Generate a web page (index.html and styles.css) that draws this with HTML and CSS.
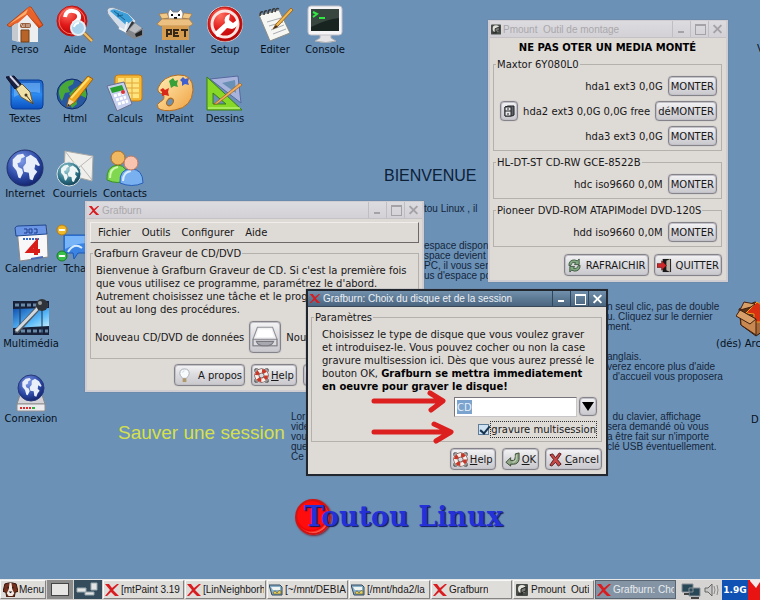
FILE: index.html
```html
<!DOCTYPE html>
<html lang="fr">
<head>
<meta charset="utf-8">
<title>Toutou Linux</title>
<link rel="stylesheet" href="styles.css">
</head>
<body>
<svg class="defs" aria-hidden="true">
  <defs>
    <linearGradient id="gBlue" x1="0" y1="0" x2="0" y2="1"><stop offset="0" stop-color="#1f62c4"/><stop offset=".5" stop-color="#2a8af0"/><stop offset="1" stop-color="#0a4fc0"/></linearGradient>
    <radialGradient id="gGlobe" cx=".4" cy=".3" r=".75"><stop offset="0" stop-color="#7f9ae6"/><stop offset=".6" stop-color="#2d4aa6"/><stop offset="1" stop-color="#0f1f66"/></radialGradient>
    <radialGradient id="gTeal" cx=".4" cy=".3" r=".75"><stop offset="0" stop-color="#9fd0d8"/><stop offset=".6" stop-color="#2f7488"/><stop offset="1" stop-color="#123c50"/></radialGradient>
    <radialGradient id="gRed" cx=".35" cy=".25" r=".8"><stop offset="0" stop-color="#ff7060"/><stop offset=".5" stop-color="#e01818"/><stop offset="1" stop-color="#b00000"/></radialGradient>
    <linearGradient id="gRoof" x1="0" y1="0" x2="1" y2="1"><stop offset="0" stop-color="#ff9a50"/><stop offset="1" stop-color="#d8400c"/></linearGradient>
    <linearGradient id="gPal" x1="0" y1="0" x2="1" y2="1"><stop offset="0" stop-color="#fff0b8"/><stop offset="1" stop-color="#f0a040"/></linearGradient>
    <linearGradient id="gFilm" x1="0" y1="0" x2="1" y2="1"><stop offset="0" stop-color="#0e4fae"/><stop offset=".6" stop-color="#58b8f8"/><stop offset="1" stop-color="#c8f0ff"/></linearGradient>
    <symbol id="continents" viewBox="0 0 36 36"><path d="M5 9l5-5 6-1 2 3-4 2-1 4-3 1 1 4 4 2 1 4-3 6-2-1-2-7-4-5zM19 7l5-3 6 4 4 7-2 1-3-2-1 5 3 3-3 4-2 5-3-1-1-7-5-1-1-5 3-4z"/></symbol>

    <symbol id="i-home" viewBox="0 0 38 38"><path d="M6 18v17l8 2h18V17L19 6z" fill="#eceef0"/><path d="M6 18v17l6 2V15z" fill="#c5cad0"/><path d="M23 2L1 20l3 2L21 9l12 14 4-3L25 2z" fill="url(#gRoof)" stroke="#b03408" stroke-width=".8"/><path d="M23 2L3 20l9-2L22 9l12 12 2-1z" fill="#e8622c"/><path d="M22 4L6 17l-2 2L20 9z" fill="#ffb070"/><rect x="14" y="18" width="11" height="5" rx="2" fill="#996040"/><path d="M15 19l2 3m1-3v3m3-3v3m2-3v3" stroke="#e8d0c0"/><path d="M15 37V25h8v12z" fill="#b86428" stroke="#704018"/></symbol>
    <symbol id="i-help" viewBox="0 0 38 38"><circle cx="16" cy="16" r="15" fill="url(#gRed)" stroke="#b81818"/><circle cx="16" cy="16" r="13" fill="none" stroke="#f47868"/><path d="M9 12q1-7 8-6 7 1 6 7-1 3-5 5v3" fill="none" stroke="#fff" stroke-width="4"/><path d="M28 28l8 8" stroke="#9a7040" stroke-width="4"/><path d="M28 28l8 8" stroke="#f0c060" stroke-width="2"/><circle cx="22" cy="23" r="7" fill="#a8dcf8" fill-opacity=".95" stroke="#e4ecf4" stroke-width="2"/><path d="M18 22q1-4 5-4" fill="none" stroke="#fff" stroke-width="2"/></symbol>
    <symbol id="i-usb" viewBox="0 0 38 38"><path d="M1 5q2-4 8-2l13 5 8 8-9 13-7-5L4 12Q1 9 1 5z" fill="#d4deea" stroke="#7b90a8"/><path d="M4 6q3-3 7-1l11 4 5 6-7 5-8-7z" fill="#3e9fd8"/><path d="M8 6l11 9m-8-4l6-1m-5-2l1 4" stroke="#14618e" fill="none"/><path d="M21 17l-2 9-6-3" fill="none" stroke="#f0f4f8" stroke-width="2"/><path d="M26 16l11 8-9 9-8-6z" fill="#33363c"/><path d="M28 18l9 6v7l-9 3-8-5 2-4z" fill="#83878c"/><path d="M23 25l6 3 7-5-7-5z" fill="#b8bcc0"/><path d="M29 29l1 3 6-2v-5z" fill="#222"/></symbol>
    <symbol id="i-pet" viewBox="0 0 38 38"><path d="M12 14V8l2-4 3 3h5l3-3 2 4v6z" fill="#fff" stroke="#888"/><path d="M15 10h2m5 0h2m-6 3h3" stroke="#111" stroke-width="2"/><path d="M6 14h27v20H6z" fill="#e0a858"/><path d="M6 14L3 9l8-1 2 5zM33 14l3-5-8-1-2 5z" fill="#f0c888" stroke="#a87030" stroke-width=".6"/><path d="M1 19l5-5h27l4 5-3 2H4z" fill="#ecc080" stroke="#b07838" stroke-width=".7"/><path d="M6 21h27v14H6z" fill="#d69c50"/><path d="M11 32v-7h4v4h-4m12-4h-5v6h5m-5-3h4m3-3h7m-3 0v7" fill="none" stroke="#382818" stroke-width="2"/></symbol>
    <symbol id="i-setup" viewBox="0 0 38 38"><circle cx="19" cy="19" r="18" fill="#e6e0e0"/><circle cx="19" cy="19" r="17" fill="url(#gRed)" stroke="#a81414"/><circle cx="19" cy="19" r="13" fill="none" stroke="#fbe4e0" stroke-width="3"/><path d="M10 31L9 27l10-9q-2-7 5-9l-1 6 4 3 5-4q1 8-6 10l-5-1-9 9z" fill="#fff"/></symbol>
    <symbol id="i-edit" viewBox="0 0 38 38"><path d="M3 10l20-5 11 23-20 8z" fill="#f6f6f2" stroke="#8c8c88"/><path d="M11 17l14-4M13 21l14-4M15 25l13-5M17 29l13-5" stroke="#a8acb4"/><path d="M4 11q0-5 3-4m1 3q0-5 3-4m1 3q0-5 3-4m1 3q0-5 3-4m0 3q1-5 4-3" stroke="#383838" stroke-width="1.5" fill="none"/><path d="M17 24l3-5L35 3l2 2-15 16z" fill="#f0b850" stroke="#a06820"/><path d="M17 24l3-4 2 2z" fill="#443020"/></symbol>
    <symbol id="i-console" viewBox="0 0 38 38"><path d="M14 29h11v4l5 3q-10 3-21 0l5-3z" fill="#e4e4e6" stroke="#b0b0b4"/><rect x="2" y="1" width="34" height="29" rx="3" fill="#f4f4f6" stroke="#c0c0c8"/><rect x="5" y="4" width="28" height="22" fill="#182420"/><path d="M5 4h28v9q-12 1-28 9z" fill="#384640"/><path d="M7 7l4 2-4 3M13 13h6" fill="none" stroke="#30e840" stroke-width="2"/></symbol>
    <symbol id="i-text" viewBox="0 0 38 38"><rect x="5" y="6" width="32" height="29" rx="4" fill="url(#gBlue)" stroke="#073c98"/><path d="M8 9h26v10q-12-3-26 4z" fill="#78b8f8" fill-opacity=".6"/><path d="M0 3l8-1 7 8-6 5z" fill="#1c2040" stroke="#0c1030"/><path d="M4 2l9 10" stroke="#d0d4e4" stroke-width="2"/><path d="M10 15l6-5 8 8 3 12-12-7z" fill="#f0e0a8" stroke="#6c5830"/><path d="M27 30l-7-9" stroke="#483820"/><circle cx="20" cy="21" r="1.5" fill="#483820"/></symbol>
    <symbol id="i-html" viewBox="0 0 38 38"><circle cx="16" cy="20" r="15" fill="#2858a0" stroke="#102c68"/><path d="M4 13q6-8 14-7l-1 4-5 3 2 5-5 1-3 8q-5-7-2-14zM18 15l8-5q6 8 4 14l-6-3-4 3 1 6-5 4-3-6 3-4-3-4z" fill="#48a838"/><path d="M11 33l2-9L32 2l5 3-18 23z" fill="#f0a820" stroke="#a06000"/><path d="M15 24L33 4" stroke="#ffe070" stroke-width="2"/><path d="M11 33l2-8 5 3z" fill="#f4d8a8"/><path d="M11 33l1-3 2 1z" fill="#222"/></symbol>
    <symbol id="i-calc" viewBox="0 0 38 38"><rect x="9" y="1" width="27" height="26" rx="3" fill="#f4b838" stroke="#c87810"/><rect x="12" y="4" width="21" height="20" fill="#ffe480"/><path d="M12 9h21M12 14h21M12 19h21M19 4v20M26 4v20" stroke="#e0a838"/><path d="M1 12l17-4 8 22-15 7z" fill="#c8d0f0" stroke="#687090"/><path d="M4 14l12-3 2 5-12 3z" fill="#28a030"/><path d="M8 22l10-3m-8 7l10-3m-8 7l10-3" stroke="#fff" stroke-width="3" stroke-dasharray="3 1"/><circle cx="17" cy="18" r="2" fill="#e03030"/></symbol>
    <symbol id="i-paint" viewBox="0 0 38 38"><path d="M22 1q15-1 15 15-1 17-18 20Q7 38 2 34q-2-4 2-6 6-3 3-8-6-1-5-6Q7 2 22 1z" fill="url(#gPal)" stroke="#b46c20"/><ellipse cx="14" cy="28" rx="3" ry="4" fill="#6b90b5" stroke="#a86820" transform="rotate(35 14 28)"/><path d="M13 7l4-3 2 3 3-1-1 4 1 3-4-1-3 2-1-4z" fill="#38a038"/><path d="M24 6l3-3 2 2 4-1-1 4 1 3-4-1-3 2v-4z" fill="#4060d0"/><path d="M4 16l3-2 2 2 4-2-1 4 1 4-4-1-3 1v-4z" fill="#d82818"/></symbol>
    <symbol id="i-draw" viewBox="0 0 38 38"><path d="M4 5l28-3 3 27z" fill="#a8b4dc" stroke="#5868a0"/><path d="M16 9l13-3 1 13z" fill="#6b90b5"/><path d="M1 3v33h35z" fill="#88d828" stroke="#388010"/><path d="M7 19v11h13z" fill="#6b90b5" stroke="#388010"/><path d="M8 30L34 9l2 2-25 19z" fill="#f0b060" stroke="#a06020" stroke-width=".7"/><path d="M2 34h32" stroke="#c8f890"/></symbol>
    <symbol id="i-globe" viewBox="0 0 38 38"><circle cx="19" cy="19" r="18" fill="url(#gGlobe)" stroke="#20306c"/><use href="#continents" x="2" y="2" width="34" height="34" fill="#e8eefa"/></symbol>
    <symbol id="i-mail" viewBox="0 0 38 38"><path d="M9 2l28 5-1 25-28-7z" fill="#f0efec" stroke="#a8a8a4"/><path d="M9 2l13 17L37 7M36 31L25 17" fill="none" stroke="#b8b8b4"/><circle cx="13" cy="25" r="12" fill="url(#gTeal)" stroke="#d8e4e8"/><use href="#continents" x="2" y="14" width="22" height="22" fill="#eef6f6"/></symbol>
    <symbol id="i-people" viewBox="0 0 38 38"><path d="M1 31q-1-14 11-15 10 1 10 15-10 5-21 0z" fill="#80d850" stroke="#389020"/><path d="M4 29q0-10 8-11" stroke="#d0f8b0" stroke-width="2" fill="none"/><circle cx="12" cy="9" r="7" fill="#f0b860" stroke="#b07020"/><path d="M14 34q-1-14 11-14 12 0 12 14-11 5-23 0z" fill="#78b0f0" stroke="#2860b8"/><path d="M17 32q0-9 8-10" stroke="#d8ecff" stroke-width="2" fill="none"/><circle cx="25" cy="14" r="7" fill="#f8c4b0" stroke="#c07860"/></symbol>
    <symbol id="i-cal" viewBox="0 0 38 38"><path d="M5 4l30-2 1 31-28 4z" fill="#f8f8f8" stroke="#888"/><path d="M3 4q1-2 3-2l28-1 1 9-31 2z" fill="#6a94e4" stroke="#204890"/><path d="M12 5h3v4h-3m5-4h3v4h-3zm5 0h3v4h-3" stroke="#1c3c90" fill="none"/><path d="M11 15h16" stroke="#3868c8" stroke-width="2" stroke-dasharray="2 1"/><path d="M24 31V19l-7 8h11" fill="none" stroke="#d81c18" stroke-width="4"/><path d="M19 35l12-2" stroke="#4868b8" stroke-width="2"/></symbol>
    <symbol id="i-chat" viewBox="0 0 38 38"><path d="M8 11h28v18H22l-4 6-1-6H8z" fill="#3c84e4" stroke="#1c58b8"/><path d="M9 12h26v7q-14-1-26 6z" fill="#78b4f8"/><path d="M12 28q6-10 14-4" fill="none" stroke="#d8ecff" stroke-width="2"/><circle cx="6" cy="6" r="5" fill="#f0b828" stroke="#b87c10"/><circle cx="6" cy="32" r="5" fill="#38c048" stroke="#187828"/><path d="M3 6h6M3 32h6" stroke="#fff" stroke-width="2"/></symbol>
    <symbol id="i-film" viewBox="0 0 38 38"><rect x="1" y="2" width="36" height="34" fill="#182038"/><path d="M1 10l36-1v18l-36 2z" fill="url(#gFilm)"/><path d="M3 6h33M3 32h33" stroke="#6888a8" stroke-width="3" stroke-dasharray="4 2"/><path d="M8 2v34M30 2v34" stroke="#183050"/><path d="M4 33L27 8" stroke="#505860" stroke-width="5"/><path d="M4 32L27 8" stroke="#d0d8e0" stroke-width="3"/><circle cx="30" cy="6" r="6" fill="#303438"/><circle cx="28" cy="4" r="2" fill="#989ca0"/></symbol>
    <symbol id="i-net" viewBox="0 0 38 38"><path d="M8 21h22l3 9H5z" fill="#d4d4d8" stroke="#888"/><rect x="5" y="30" width="28" height="7" rx="1" fill="#ececee" stroke="#909094"/><path d="M8 34h11" stroke="#d83030" stroke-width="2" stroke-dasharray="2 1"/><path d="M20 34h3" stroke="#30b040" stroke-width="2"/><circle cx="19" cy="14" r="13" fill="url(#gGlobe)" stroke="#28387c"/><use href="#continents" x="7" y="2" width="24" height="24" fill="#e8eefa"/></symbol>
    <symbol id="i-box" viewBox="0 0 38 38"><path d="M3 10l16-7 17 7v16L20 37 5 26z" fill="#a86838" stroke="#301808"/><path d="M4 11l16 8 16-9-16-6z" fill="#5c3418"/><path d="M10 14L21 3l14 10-4 2v8H18v-8z" fill="#d83010" stroke="#f0a020"/><path d="M4 11l16 9v16L5 26z" fill="#c88850" stroke="#402010"/><path d="M4 11L0 17l14 8 6-5zM4 11L8 3l11 2-4 3z" fill="#d8a068" stroke="#402010"/></symbol>

    <symbol id="x-logo" viewBox="0 0 14 12"><path d="M0 0h4l3 4 5-4h2L8 6l6 6h-4L6 8l-4 4H0l5-6z" fill="#d81c20"/></symbol>
    <symbol id="s-buoy" viewBox="0 0 16 16"><circle cx="8" cy="8" r="5" fill="none" stroke="#401814" stroke-width="5"/><circle cx="8" cy="8" r="5" fill="none" stroke="#f8f0ec" stroke-width="4"/><circle cx="8" cy="8" r="5" fill="none" stroke="#c83828" stroke-width="4" stroke-dasharray="4 3.85"/><path d="M1 4V1h3m8 0h3v3M1 12v3h3m8 0h3v-3" fill="none" stroke="#333"/></symbol>
    <symbol id="s-bulb" viewBox="0 0 16 16"><path d="M8 1q5 0 5 5 0 2-3 5H6Q3 8 3 6q0-5 5-5z" fill="#f8fafc" stroke="#a8b0b8"/><path d="M6 5q0-2 2-2" stroke="#c8d8e8" fill="none"/><path d="M6 11h4v4H6z" fill="#b0986c"/></symbol>
    <symbol id="s-ok" viewBox="0 0 16 16"><path d="M1 11l5-5v3h3q2-1 2-4V2l4-1v7q-1 5-6 5H6v2z" fill="#90a888" stroke="#384830"/><path d="M12 3v5q-1 3-4 3" fill="none" stroke="#c8d8c0"/></symbol>
    <symbol id="s-cancel" viewBox="0 0 16 16"><path d="M2 3l3-1 3 4 4-5 2 1-4 6 4 5-3 2-3-4-4 4-2-1 4-6z" fill="#c84848" stroke="#581818"/></symbol>
    <symbol id="s-refresh" viewBox="0 0 16 16"><path d="M2 8q0-6 6-6l3 1 2-2v6H8l1-2q-4-1-5 3zM14 8q0 6-6 6l-3-1-2 2V9h5l-1 2q4 1 5-3z" fill="#80a880" stroke="#284028" stroke-width=".8"/></symbol>
    <symbol id="s-quit" viewBox="0 0 16 16"><path d="M6 1h9v14H6z" fill="#181818"/><path d="M10 3l4-2v14l-4-2z" fill="#b8b0a0"/><path d="M0 6h5V3l5 5-5 5v-3H0z" fill="#d02828" stroke="#601010" stroke-width=".7"/></symbol>
    <symbol id="s-cabinet" viewBox="0 0 12 12"><path d="M2 2l3-1h6v9l-2 1H2z" fill="#606468" stroke="#202428"/><path d="M2 2h6v9H2z" fill="#e8e8e8" stroke="#202428"/><path d="M2 6h6M4 4h2M4 9h2" stroke="#202428"/></symbol>
    <symbol id="s-drive" viewBox="0 0 24 24"><path d="M5 3h14l4 11v6H1v-6z" fill="#f2f2f4" stroke="#909098"/><path d="M1 14h22v6H1z" fill="#dcdce0" stroke="#808088"/><path d="M4 16h16q-1 3-5 4H9q-4-1-5-4z" fill="#a8a8b0" stroke="#78787e"/><path d="M6 5h12l2 7H4z" fill="#fff"/></symbol>
    <symbol id="s-disk" viewBox="0 0 12 12"><rect width="12" height="12" rx="1" fill="#484c48"/><circle cx="6" cy="5" r="4" fill="#e4e4dc"/><path d="M5 5l5-2v4L5 9zM2 10h5" fill="#787c78" stroke="#202020"/></symbol>
    <symbol id="s-file" viewBox="0 0 14 12"><path d="M0 1h11l2 2v8H3z" fill="#88b0c8" stroke="#304860"/><path d="M2 3h9v3H4z" fill="#f0f4f0"/><path d="M4 9q2-4 4 0 2-4 4-2v3H5z" fill="#e8d060" stroke="#505030" stroke-width=".6"/></symbol>
    <symbol id="s-dog" viewBox="0 0 16 16"><path d="M2 2l4-1h4l4 1 2 8-3 1-1 5H4l-1-5-3-1z" fill="#74301c" stroke="#301008"/><path d="M7 1h2l1 7 2 4-2 3H6l-2-3 2-4z" fill="#f4ece4"/><path d="M6 10h4l-2 2z" fill="#181010"/><path d="M5 6h1m4 0h1" stroke="#100808" stroke-width="2"/></symbol>
  </defs>
</svg>

<div class="screen">
  <main class="desktop">
    <h2 class="welcome">BIENVENUE</h2>
    <p class="wall wall-intro">tou Linux , il</p>
    <p class="wall wall-space">espace dispon<br>space devient<br>PC, il vous ser<br>us d'espace po</p>
    <div class="wall wall-right">
      <p>n seul clic, pas de double<br>u. Cliquez sur le dernier<br>ment.</p>
      <p>anglais.<br>verez encore plus d'aide<br>&nbsp; d'accueil vous proposera</p>
      <p>&nbsp; du clavier, affichage<br>sera demandé où vous<br>a être fait sur n'importe<br>clé USB éventuellement.</p>
    </div>
    <p class="wall wall-left">Lor<br>vide<br>vou<br>que<br>Ce</p>
    <h2 class="save">Sauver une session</h2>
    <div class="brand"><span class="brand-ball"></span><h1>Toutou Linux</h1></div>

    <nav class="icons" aria-label="Bureau">
      <a class="icon" href="#"><svg><use href="#i-home"/></svg>Perso</a>
      <a class="icon" href="#"><svg><use href="#i-help"/></svg>Aide</a>
      <a class="icon" href="#"><svg><use href="#i-usb"/></svg>Montage</a>
      <a class="icon" href="#"><svg><use href="#i-pet"/></svg>Installer</a>
      <a class="icon" href="#"><svg><use href="#i-setup"/></svg>Setup</a>
      <a class="icon" href="#"><svg><use href="#i-edit"/></svg>Editer</a>
      <a class="icon" href="#"><svg><use href="#i-console"/></svg>Console</a>
      <a class="icon first" href="#"><svg><use href="#i-text"/></svg>Textes</a>
      <a class="icon" href="#"><svg><use href="#i-html"/></svg>Html</a>
      <a class="icon" href="#"><svg><use href="#i-calc"/></svg>Calculs</a>
      <a class="icon" href="#"><svg><use href="#i-paint"/></svg>MtPaint</a>
      <a class="icon" href="#"><svg><use href="#i-draw"/></svg>Dessins</a>
      <a class="icon first" href="#"><svg><use href="#i-globe"/></svg>Internet</a>
      <a class="icon" href="#"><svg><use href="#i-mail"/></svg>Courriels</a>
      <a class="icon" href="#"><svg><use href="#i-people"/></svg>Contacts</a>
      <a class="icon first wide" href="#"><svg><use href="#i-cal"/></svg>Calendrier</a>
      <a class="icon" href="#"><svg><use href="#i-chat"/></svg>Tcha</a>
      <a class="icon first wide" href="#"><svg><use href="#i-film"/></svg>Multimédia</a>
      <a class="icon first wide" href="#"><svg><use href="#i-net"/></svg>Connexion</a>
    </nav>
    <div class="edge edge-v">V</div>
    <a class="icon edge edge-box" href="#"><svg><use href="#i-box"/></svg>(dés) Arc</a>
    <div class="edge edge-d">D</div>

    <section class="window pmount">
      <header class="titlebar"><svg class="t-disk"><use href="#s-disk"/></svg><span class="title">Pmount&nbsp; Outil de montage</span><button class="ctl min" aria-label="Réduire"></button><button class="ctl max" aria-label="Agrandir"></button><button class="ctl close" aria-label="Fermer"></button></header>
      <div class="body">
        <h3>NE PAS OTER UN MEDIA MONTÉ</h3>
        <fieldset>
          <legend>Maxtor 6Y080L0</legend>
          <div class="row">hda1 ext3 0,0G <button class="btn">MONTER</button></div>
          <div class="row"><button class="btn cab" aria-label="Ouvrir"><svg><use href="#s-cabinet"/></svg></button>hda2 ext3 0,0G 0,0G free <button class="btn">déMONTER</button></div>
          <div class="row">hda3 ext3 0,0G <button class="btn">MONTER</button></div>
        </fieldset>
        <fieldset>
          <legend>HL-DT-ST CD-RW GCE-8522B</legend>
          <div class="row">hdc iso9660 0,0M <button class="btn">MONTER</button></div>
        </fieldset>
        <fieldset>
          <legend>Pioneer DVD-ROM ATAPIModel DVD-120S</legend>
          <div class="row">hdd iso9660 0,0M <button class="btn">MONTER</button></div>
        </fieldset>
        <div class="actions"><button class="btn big"><svg><use href="#s-refresh"/></svg>RAFRAICHIR</button><button class="btn big"><svg><use href="#s-quit"/></svg>QUITTER</button></div>
      </div>
    </section>

    <section class="window grafburn">
      <header class="titlebar"><svg class="t-x"><use href="#x-logo"/></svg><span class="title">Grafburn</span><button class="ctl min" aria-label="Réduire"></button><button class="ctl max" aria-label="Agrandir"></button><button class="ctl close" aria-label="Fermer"></button></header>
      <div class="body">
        <nav class="menubar"><a href="#">Fichier</a><a href="#">Outils</a><a href="#">Configurer</a><a href="#">Aide</a></nav>
        <fieldset>
          <legend>Grafburn Graveur de CD/DVD</legend>
          <p>Bienvenue à Grafburn Graveur de CD. Si c'est la première fois<br>que vous utilisez ce programme, paramétrez le d'abord.<br>Autrement choisissez une tâche et le prog<br>tout au long des procédures.</p>
          <div class="tasks">Nouveau CD/DVD de données <button class="btn drive" aria-label="Nouveau CD/DVD de données"><svg><use href="#s-drive"/></svg></button>Nou</div>
        </fieldset>
        <div class="actions"><button class="btn big about"><svg><use href="#s-bulb"/></svg>A propos</button><button class="btn big"><svg><use href="#s-buoy"/></svg><span><u>H</u>elp</span></button><button class="btn big" aria-label="Quitter"><svg><use href="#s-quit"/></svg></button></div>
      </div>
    </section>

    <section class="window dialog">
      <header class="titlebar"><svg class="t-x"><use href="#x-logo"/></svg><span class="title">Grafburn: Choix du disque et de la session</span><button class="ctl min" aria-label="Réduire"></button><button class="ctl max" aria-label="Agrandir"></button><button class="ctl close" aria-label="Fermer"></button></header>
      <div class="body">
        <fieldset>
          <legend>Paramètres</legend>
          <p>Choisissez le type de disque que vous voulez graver<br>et introduisez-le. Vous pouvez cocher ou non la case<br>gravure multisession ici. Dès que vous aurez pressé le<br>bouton OK, <b>Grafburn se mettra immediatement<br>en oeuvre pour graver le disque!</b></p>
          <div class="combo"><input type="text" value="CD" aria-label="Type de disque"><button class="btn arrow" aria-label="Choisir"></button></div>
          <div class="check"><input type="checkbox" id="multi" checked><label for="multi">gravure multisession</label></div>
        </fieldset>
        <div class="actions"><button class="btn big"><svg><use href="#s-buoy"/></svg><span><u>H</u>elp</span></button><button class="btn big"><svg><use href="#s-ok"/></svg><span><u>O</u>K</span></button><button class="btn big"><svg><use href="#s-cancel"/></svg><span><u>C</u>ancel</span></button></div>
      </div>
      <svg class="arrows" viewBox="0 0 90 56" aria-hidden="true"><g fill="none" stroke="#dc2020" stroke-width="5" stroke-linecap="round" stroke-linejoin="round"><path d="M5 13h68M61 5l13 8-12 9"/><path d="M5 44h76M65 36l17 8-15 9"/></g></svg>
    </section>
  </main>

  <footer class="taskbar">
    <button class="start"><svg><use href="#s-dog"/></svg>Menu</button>
    <div class="pager"><span></span></div>
    <div class="pager on"><svg viewBox="0 0 28 19"><path d="M3 8h9v4H3zM17 3h6v7h-6zM11 12h9v3h-9z" fill="#e4e4e4" stroke="#98a8b0"/></svg></div>
    <button class="task"><svg><use href="#x-logo"/></svg><span>[mtPaint 3.19</span></button>
    <button class="task"><svg><use href="#x-logo"/></svg><span>[LinNeighborh</span></button>
    <button class="task"><svg><use href="#s-file"/></svg><span>[~/mnt/DEBIA</span></button>
    <button class="task"><svg><use href="#s-file"/></svg><span>[/mnt/hda2/la</span></button>
    <button class="task"><svg><use href="#x-logo"/></svg><span>Grafburn</span></button>
    <button class="task"><svg><use href="#s-disk"/></svg><span>Pmount&nbsp; Outi</span></button>
    <button class="task active"><svg><use href="#x-logo"/></svg><span>Grafburn: Cho</span></button>
    <div class="tray"><svg viewBox="0 0 46 20" aria-hidden="true"><path d="M6 4h11v8H6zM13 8h11v8H13z" fill="#284858" stroke="#889098"/><path d="M8 14h5M15 18h8" stroke="#444" stroke-width="2"/><path d="M29 8h3l4-4v12l-4-4h-3z" fill="#c8c8c8" stroke="#666"/><path d="M38 6q2 4 0 8M41 5q2 5 0 10" fill="none" stroke="#888"/></svg></div>
    <div class="free">1.9G</div>
    <div class="meter"><svg viewBox="0 0 12 20" aria-hidden="true"><path d="M2 1l6 7 4-6V0H2z" fill="#f4e8e8"/></svg></div>
  </footer>
</div>
</body>
</html>
```
FILE: styles.css
```css
* { box-sizing: border-box; }

body {
  margin: 0;
  font: 10px/13px "DejaVu Sans", sans-serif;
  color: #181818;
}

h1, h2, h3, p, fieldset, legend { margin: 0; padding: 0; }
button, input { font: inherit; color: inherit; margin: 0; padding: 0; }
a { color: inherit; text-decoration: none; }
.defs { position: absolute; width: 0; height: 0; }

.screen {
  display: flex;
  flex-direction: column;
  min-height: 100vh;
  overflow: hidden;
}

.desktop {
  position: relative;
  flex: 1;
  overflow: hidden;
  background: #6b91b6;
}

/* Wallpaper text */
.welcome, .save, .wall {
  position: absolute;
  font-family: "Liberation Sans", sans-serif;
  white-space: nowrap;
}
.welcome { left: 384px; top: 167px; font-size: 16px; line-height: 18px; font-weight: 400; color: #0c2038; }
.save { left: 118px; top: 423px; font-size: 19px; line-height: 20px; font-weight: 400; color: #d6e04c; }
.wall { font-size: 10px; line-height: 10px; color: #14263c; }
.wall-intro { left: 424px; top: 204px; }
.wall-space { left: 424px; top: 241px; }
.wall-right { left: 607px; top: 302px; }
.wall-right p { margin-bottom: 20px; }
.wall-right p + p { margin-bottom: 30px; }
.wall-left { left: 291px; top: 412px; }

.brand { position: absolute; left: 295px; top: 499px; display: flex; align-items: center; }
.brand-ball {
  width: 36px;
  height: 36px;
  margin-right: -27px;
  border: 2px solid #d01414;
  border-radius: 50%;
  background: radial-gradient(circle at 45% 45%, #ff0c0c 55%, #f00000 62%, #ff6050 70%);
  box-shadow: 1px 1px 2px #702838;
}
.brand h1 {
  font: bold 27px/36px "DejaVu Serif", serif;
  color: #2430d8;
  text-shadow: 1px 1px 1px #101858;
  white-space: nowrap;
}

/* Desktop icons */
.icons {
  display: grid;
  grid-template-columns: repeat(7, 50px);
  grid-template-rows: 69px;
  grid-auto-rows: 75px;
  width: 350px;
  padding-top: 5px;
}
.icon {
  display: flex;
  flex-direction: column;
  align-items: center;
  width: 50px;
  color: #06101c;
  white-space: nowrap;
}
.icon svg { width: 38px; height: 38px; flex: none; }
.icon.first { grid-column: 1; }
.icon.wide { width: 62px; }
.edge { position: absolute; color: #06101c; }
.edge-v { left: 757px; top: 42px; }
.edge-d { left: 751px; top: 413px; }
.edge-box { left: 716px; top: 299px; width: 80px; align-items: flex-start; }
.edge-box svg { margin-left: 20px; }

/* Windows */
.window {
  position: absolute;
  border: 2px solid #cfcdd2;
  border-top-width: 1px;
  background: #dedad6;
  box-shadow: 0 0 1px #68747f;
}
.pmount { left: 488px; top: 20px; width: 240px; }
.grafburn { left: 85px; top: 201px; width: 339px; height: 191px; }
.dialog { left: 306px; top: 289px; width: 302px; border: 2px solid #22262e; }

.titlebar {
  display: flex;
  align-items: center;
  height: 17px;
  background: linear-gradient(#dcdbdf, #d3d1d5);
  border-bottom: 1px solid #c4c2c4;
  font: 10px/13px "Liberation Sans", sans-serif;
  color: #aaa8ac;
}
.titlebar svg { flex: none; margin: 0 2px 0 1px; }
.t-x { width: 12px; height: 9px; }
.t-disk { width: 10px; height: 11px; }
.title { flex: 1; white-space: nowrap; }
.ctl {
  position: relative;
  width: 18px;
  height: 16px;
  border: 0;
  border-left: 1px solid #c0bec2;
  background: none;
  color: #a4a2a6;
}
.ctl::before, .ctl.close::after { content: ""; position: absolute; }
.min::before { left: 5px; bottom: 4px; width: 6px; height: 2px; background: currentColor; }
.max::before { left: 4px; top: 3px; width: 9px; height: 8px; border: 1px solid; border-top-width: 2px; }
.close::before, .close::after { left: 3px; top: 7px; width: 11px; height: 2px; background: currentColor; }
.close::before { transform: rotate(45deg); }
.close::after { transform: rotate(-45deg); }
.dialog .titlebar { height: 16px; background: linear-gradient(#7190ab, #4a6580); border-bottom-color: #384858; color: #edf1f5; }
.dialog .ctl { color: #fff; border-left-color: #30465c; height: 15px; }

fieldset {
  min-width: 0;
  border: 1px solid #b4b0ac;
}
legend { margin-left: 2px; padding: 0 1px; white-space: nowrap; }

.btn {
  display: inline-flex;
  align-items: center;
  justify-content: center;
  height: 20px;
  padding: 0 2px;
  border: 1px solid #85838a;
  border-radius: 4px;
  background: linear-gradient(#f4f3f5, #dddce0 45%, #c9c8cc);
  box-shadow: inset 0 0 0 1px #c2c1c8, 0 0 1px #98969c;
  white-space: nowrap;
}
.btn.big { height: 22px; gap: 2px; }
.btn.big svg { width: 15px; height: 15px; flex: none; }
.actions { display: flex; justify-content: flex-end; gap: 6px; }

.pmount .body { padding: 3px 4px 4px 3px; }
.pmount h3 { font-size: 10px; line-height: 13px; text-align: center; margin-bottom: 4px; color: #000; }
.pmount fieldset { margin-bottom: 5px; padding: 5px 4px 4px 0; display: grid; gap: 5px; }
.row { display: flex; align-items: center; justify-content: flex-end; gap: 5px; height: 20px; }
.row .btn { min-width: 48px; }
.row .cab { min-width: 18px; width: 18px; }
.cab svg { width: 12px; height: 12px; flex: none; }
.pmount .actions { padding-top: 2px; gap: 5px; }
.pmount .big { gap: 4px; }

.grafburn .body { padding: 3px 3px 0; }
.menubar {
  display: flex;
  gap: 11px;
  height: 21px;
  padding: 3px 7px 0;
  border: 1px solid #6c6a68;
  border-top-color: #f0eeec;
  border-left-color: #f0eeec;
}
.grafburn fieldset { margin-top: 4px; padding: 4px 0 0; height: 112px; white-space: nowrap; }
.grafburn fieldset p { padding-left: 5px; }
.tasks { display: flex; align-items: center; gap: 5px; margin-top: 5px; padding-left: 4px; }
.drive { width: 32px; height: 32px; }
.drive svg { width: 26px; height: 26px; flex: none; }
.grafburn .actions { justify-content: flex-start; margin-top: 5px; padding-left: 84px; }
.grafburn .about { gap: 6px; }

.dialog .body { padding: 4px 4px 4px 3px; }
.dialog fieldset { padding: 4px 4px 3px 0; white-space: nowrap; }
.dialog p { padding-left: 10px; }
.dialog p b { color: #000; }
.combo { display: flex; justify-content: flex-end; gap: 2px; margin-top: 4px; }
.combo input {
  width: 123px;
  height: 20px;
  padding-left: 2px;
  border: 1px solid #78767a;
  border-right-color: #c8c6c8;
  border-bottom-color: #c8c6c8;
  color: #e4f0fa;
  background: #fff linear-gradient(#7ba3cd, #7ba3cd) no-repeat 2px 2px / 15px 14px;
  outline: 0;
}
.arrow { width: 18px; height: 19px; }
.arrow::before { content: ""; border: 6px solid transparent; border-top: 9px solid #000; border-bottom: 0; }
.check { display: flex; align-items: center; justify-content: flex-end; height: 18px; margin-top: 3px; }
.check input {
  appearance: none;
  width: 11px;
  height: 11px;
  margin-right: 1px;
  border: 1px solid #5f7d98;
  background: #cfe2f2;
  position: relative;
}
.check input:checked::before {
  content: "";
  position: absolute;
  left: 3px;
  top: -1px;
  width: 4px;
  height: 8px;
  border: solid #163450;
  border-width: 0 2px 2px 0;
  transform: rotate(40deg);
}
.check label { height: 17px; padding: 1px 0 0; border: 1px dotted #333; }
.dialog .actions { padding: 6px 0 0; }
.arrows { position: absolute; left: 61px; top: 97px; width: 90px; height: 56px; }

/* Taskbar */
.taskbar {
  display: flex;
  height: 21px;
  background: #d4d2d0;
  border-top: 1px solid #e8e8e8;
  font: 10px/14px "Liberation Sans", sans-serif;
  color: #181818;
}
.start, .task {
  display: flex;
  align-items: center;
  gap: 2px;
  height: 19px;
  border: 1px solid #858381;
  border-top-color: #f8f8f8;
  border-left-color: #f8f8f8;
  background: #dfddda;
  overflow: hidden;
  white-space: nowrap;
}
.start { flex: none; width: 46px; padding-left: 2px; gap: 1px; }
.start svg { width: 15px; height: 15px; flex: none; }
.pager { flex: none; width: 26px; height: 19px; margin-left: 1px; background: #8c8c8c; padding: 3px 4px; }
.pager span { display: block; height: 13px; background: #e8e6e4; border: 1px solid #444; }
.pager.on { width: 28px; padding: 0; background: #344c5c; }
.pager.on svg { display: block; width: 28px; height: 19px; }
.task { flex: 1 1 0; min-width: 0; margin-left: 1px; padding: 0 1px; }
.task svg { width: 14px; height: 12px; flex: none; }
.task span { overflow: hidden; }
.task.active { background: #8494a4; border-color: #58646f; color: #e8ecf0; }
.tray { flex: none; width: 46px; height: 20px; background: #d6d4d2; }
.tray svg { display: block; width: 46px; height: 20px; }
.free { flex: none; width: 26px; background: #1052b4; color: #fff; font: bold 9px/20px "DejaVu Sans", sans-serif; text-align: center; }
.meter { flex: none; width: 12px; background: #e81414; }
.meter svg { display: block; width: 12px; height: 20px; }
```
